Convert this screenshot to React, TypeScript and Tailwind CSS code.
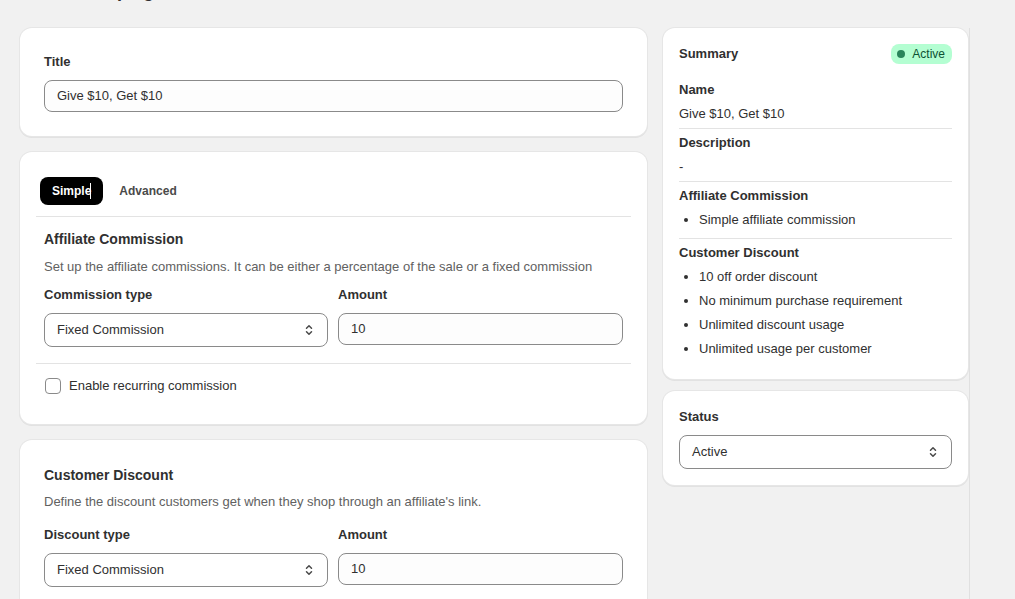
import React from 'react'

function SelectIcon() {
  return (
    <svg width="20" height="20" viewBox="0 0 20 20" fill="none" className="shrink-0">
      <path d="M7.5 8.25 10 5.75l2.5 2.5" stroke="#4a4a4a" strokeWidth="1.5" strokeLinecap="round" strokeLinejoin="round" />
      <path d="M7.5 11.75 10 14.25l2.5-2.5" stroke="#4a4a4a" strokeWidth="1.5" strokeLinecap="round" strokeLinejoin="round" />
    </svg>
  )
}

function Card({ children, className = '' }: { children: React.ReactNode; className?: string }) {
  return (
    <div
      className={`rounded-xl bg-white shadow-[0_0_0_1px_#e6e6e6,0_1px_0_1px_rgba(26,26,26,0.07)] ${className}`}
    >
      {children}
    </div>
  )
}

function FakeSelect({ value }: { value: string }) {
  return (
    <div className="flex h-[34px] items-center justify-between rounded-lg border border-[#8a8a8a] bg-white pl-3 pr-2 text-[13px] text-[#303030]">
      <span>{value}</span>
      <SelectIcon />
    </div>
  )
}

function FakeInput({ value }: { value: string }) {
  return (
    <div className="flex h-[32px] items-center rounded-lg border border-[#8a8a8a] bg-[#fdfdfd] px-3 text-[13px] text-[#303030]">
      {value}
    </div>
  )
}

function TypeAmountRow({ typeLabel }: { typeLabel: string }) {
  return (
    <div className="grid grid-cols-[284px_1fr] gap-[10px]">
      <div>
        <div className="h-5 text-[13px] font-bold leading-5 text-[#303030]">{typeLabel}</div>
        <div className="mt-[8px]">
          <FakeSelect value="Fixed Commission" />
        </div>
      </div>
      <div>
        <div className="h-5 text-[13px] font-bold leading-5 text-[#303030]">Amount</div>
        <div className="mt-[8px]">
          <FakeInput value="10" />
        </div>
      </div>
    </div>
  )
}

function SummarySection({
  label,
  children,
  last = false,
  pt = 'pt-[2px]',
  pb = 'pb-[2px]',
}: {
  label: string
  children: React.ReactNode
  last?: boolean
  pt?: string
  pb?: string
}) {
  return (
    <div className={last ? pt : `${pt} ${pb} border-b border-[#e3e3e3]`}>
      <div className="text-[13px] font-bold leading-6 text-[#303030]">{label}</div>
      {children}
    </div>
  )
}

export default function App() {
  return (
    <div
      className="min-h-screen overflow-hidden bg-[#f1f1f1] text-[#303030]"
      style={{ fontFamily: '"Liberation Sans", Arial, sans-serif' }}
    >
      {/* Page title, scrolled mostly out of view */}
      <h1 className="-mt-[23px] h-[28px] pl-5 text-[18px] font-bold leading-[28px] text-[#303030]">
        Create campaign
      </h1>

      <div className="mt-[23px] flex items-start pl-5">
        {/* Main column */}
        <div className="flex w-[627px] flex-col gap-4">
          <Card className="p-6">
            <div className="h-5 text-[13px] font-bold leading-5">Title</div>
            <div className="mt-2">
              <FakeInput value="Give $10, Get $10" />
            </div>
          </Card>

          <Card className="px-4 pt-4 pb-4">
            <div className="flex gap-1 border-b border-[#e3e3e3] px-1 pt-[9px] pb-[11px]">
              <button className="relative flex h-7 items-center rounded-lg bg-black px-3 text-[12px] font-bold text-white">
                Simple
                <span className="absolute right-[12px] top-[6px] h-4 w-px bg-white" />
              </button>
              <button className="flex h-7 items-center rounded-lg px-3 text-[12px] font-bold text-[#4a4a4a]">
                Advanced
              </button>
            </div>

            <div className="px-2 pt-3 pb-4">
              <h2 className="h-5 text-[14px] font-bold leading-5">Affiliate Commission</h2>
              <p className="mt-[8px] h-5 text-[13px] leading-5 text-[#616161]">
                Set up the affiliate commissions. It can be either a percentage of the sale or a fixed commission
              </p>
              <div className="mt-2">
                <TypeAmountRow typeLabel="Commission type" />
              </div>
            </div>

            <div className="border-t border-[#e3e3e3] px-2 pt-[12px] pb-[12px]">
              <label className="flex h-5 items-center gap-2">
                <span className="ml-px h-4 w-4 rounded-[4px] border border-[#8a8a8a] bg-white" />
                <span className="text-[13px] text-[#303030]">Enable recurring commission</span>
              </label>
            </div>
          </Card>

          <Card className="px-4 pt-4 pb-6">
            <div className="px-2 pt-[9px]">
              <h2 className="h-5 text-[14px] font-bold leading-5">Customer Discount</h2>
              <p className="mt-[7px] h-5 text-[13px] leading-5 text-[#616161]">
                Define the discount customers get when they shop through an affiliate's link.
              </p>
              <div className="mt-[13px]">
                <TypeAmountRow typeLabel="Discount type" />
              </div>
              <div className="h-24" />
            </div>
          </Card>
        </div>

        {/* Side column */}
        <div className="ml-4 flex w-[305px] flex-col gap-3">
          <Card className="px-4 pt-4 pb-[18px]">
            <div className="flex h-5 items-center justify-between">
              <span className="text-[13px] font-bold">Summary</span>
              <span className="flex h-5 items-center gap-[7px] rounded-lg bg-[#b4fed2] pl-[6px] pr-[7px] text-[12px] text-[#0c5132]">
                <span className="h-2 w-2 rounded-full bg-[#29845a]" />
                Active
              </span>
            </div>

            <div className="mt-[13px]">
              <SummarySection label="Name" pt="pt-px">
                <div className="text-[13px] leading-6">Give $10, Get $10</div>
              </SummarySection>
              <SummarySection label="Description">
                <div className="text-[13px] leading-6">-</div>
              </SummarySection>
              <SummarySection label="Affiliate Commission" pb="pb-[6px]">
                <ul className="list-disc pl-5 text-[13px] leading-6">
                  <li>Simple affiliate commission</li>
                </ul>
              </SummarySection>
              <SummarySection label="Customer Discount" last>
                <ul className="list-disc pl-5 text-[13px] leading-6">
                  <li>10 off order discount</li>
                  <li>No minimum purchase requirement</li>
                  <li>Unlimited discount usage</li>
                  <li>Unlimited usage per customer</li>
                </ul>
              </SummarySection>
            </div>
          </Card>

          <Card className="px-4 pt-[16px] pb-4">
            <div className="h-5 text-[13px] font-bold leading-5">Status</div>
            <div className="mt-[8px]">
              <FakeSelect value="Active" />
            </div>
          </Card>
        </div>

        {/* Right divider */}
        <div className="ml-[1px] w-px self-stretch bg-[#e0e0e0]" />
      </div>
    </div>
  )
}
